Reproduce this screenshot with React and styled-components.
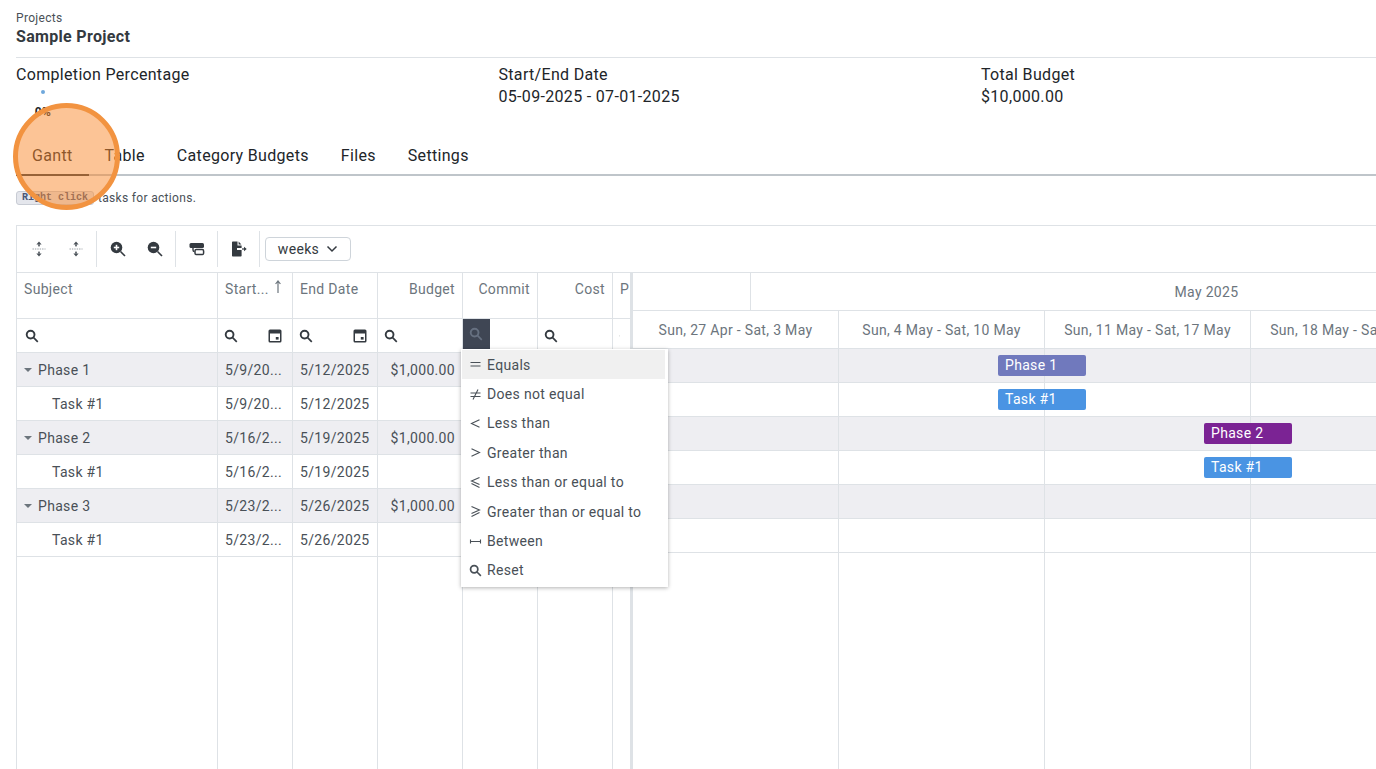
import styled, { createGlobalStyle } from 'styled-components';

const GlobalStyle = createGlobalStyle`
  html, body {
    margin: 0;
    padding: 0;
    height: 100%;
    overflow: hidden;
    background: #fff;
  }
  body {
    font-family: 'Roboto', 'Liberation Sans', sans-serif;
    letter-spacing: 0.02em;
    color: #212529;
  }
`;

const Viewport = styled.div`
  width: 1376px;
  height: 769px;
  overflow: hidden;
  position: relative;
`;

const Page = styled.div`
  width: 1447px;
  margin-left: 16px;
`;

const Header = styled.header`
  padding: 9px 0 10px;
  border-bottom: 1px solid #dee2e6;
`;

const Crumb = styled.div`
  font-size: 12px;
  line-height: 18px;
  color: #495057;
`;

const Title = styled.h1`
  margin: 0;
  font-size: 16px;
  line-height: 20px;
  font-weight: 700;
  color: #343a40;
`;

const Stats = styled.section`
  display: grid;
  grid-template-columns: repeat(3, 482.5px);
  padding-top: 6px;
  height: 55px;
`;

const Stat = styled.div`
  font-size: 16px;
  line-height: 22px;
`;

const Progress = styled.div`
  width: 54px;
  display: flex;
  flex-direction: column;
  align-items: center;
  padding-top: 4px;
`;

const ProgressDot = styled.span`
  width: 4px;
  height: 4px;
  border-radius: 50%;
  background: #6fa8dc;
`;

const ProgressText = styled.span`
  margin-top: 10px;
  font-size: 12px;
  line-height: 16px;
  font-weight: 700;
  color: #212529;
`;

const Tabs = styled.nav`
  display: flex;
  margin-top: 19px;
  border-bottom: 2px solid #bfc5ca;
`;

const Tab = styled.div`
  padding: 0 16px;
  height: 36px;
  line-height: 36px;
  font-size: 16px;
  margin-bottom: -2px;
  border-bottom: 2px solid ${({ $active }) => ($active ? '#343a40' : 'transparent')};
  box-sizing: content-box;
`;

const Hint = styled.p`
  margin: 14px 0 19px;
  font-size: 12px;
  line-height: 16px;
  color: #495057;
  display: flex;
  align-items: center;
  gap: 4px;
`;

const Kbd = styled.kbd`
  font-family: 'Liberation Mono', monospace;
  font-size: 10px;
  line-height: 10px;
  font-weight: 700;
  letter-spacing: 0;
  padding: 1px 5px;
  color: #495678;
  background: #e4e6ec;
  border: 1px solid #c8ccd4;
  border-radius: 3px;
`;

const Gantt = styled.section`
  position: relative;
  border-top: 1px solid #dee2e6;
  border-left: 1px solid #dee2e6;
  height: 543px;
  display: flex;
  flex-direction: column;
`;

const Toolbar = styled.div`
  display: flex;
  align-items: center;
  height: 46px;
  padding-left: 3px;
  border-bottom: 1px solid #dee2e6;
  box-sizing: content-box;
  flex: none;
`;

const ToolButton = styled.button`
  width: 37px;
  height: 36px;
  padding: 0;
  border: 0;
  background: transparent;
  display: flex;
  align-items: center;
  justify-content: center;
  color: #343a40;
`;

const ToolSep = styled.span`
  width: 1px;
  height: 36px;
  margin: 0 ${({ $after }) => $after ?? 2}px 0 2px;
  background: #dee2e6;
`;

const Select = styled.div`
  width: 86px;
  height: 24px;
  box-sizing: border-box;
  border: 1px solid #ced4da;
  border-radius: 4px;
  display: flex;
  align-items: center;
  justify-content: center;
  gap: 7px;
  font-size: 14px;
  color: #343a40;
`;

const Panes = styled.div`
  flex: 1;
  display: flex;
  min-height: 0;
`;

const LeftPane = styled.div`
  width: 614px;
  flex: none;
  display: flex;
  flex-direction: column;
  overflow: hidden;
`;

const Row = styled.div`
  display: grid;
  grid-template-columns: 201px 75px 85px 85px 75px 75px 18px;
  height: ${({ $h }) => $h}px;
  flex: ${({ $fill }) => ($fill ? '1' : 'none')};
  background: ${({ $band }) => ($band ? '#eeeef2' : '#fff')};
  font-size: 14px;
  color: #495057;
`;

const Cell = styled.div`
  box-sizing: border-box;
  border-right: 1px solid #dee2e6;
  border-bottom: ${({ $noLine }) => ($noLine ? '0' : '1px solid #dee2e6')};
  padding: 0 ${({ $right }) => ($right ? '7px' : '7px')} 0 7px;
  padding-left: ${({ $indent }) => $indent ?? 7}px;
  display: flex;
  align-items: center;
  justify-content: ${({ $right }) => ($right ? 'flex-end' : 'flex-start')};
  white-space: nowrap;
  overflow: hidden;
`;

const HeadCell = styled(Cell)`
  align-items: flex-start;
  padding-top: 7px;
  color: #6c757d;
  line-height: 18px;
  gap: 5px;
`;

const FilterCell = styled(Cell)`
  padding-left: ${({ $indent }) => $indent ?? 6}px;
  padding-right: 10px;
  justify-content: space-between;
  color: #343a40;
`;

const FilterActive = styled.span`
  width: 28px;
  height: 30px;
  margin: -3px 0 0 -7px;
  background: #3f4654;
  color: #667080;
  display: flex;
  align-items: center;
  justify-content: center;
`;

const Caret = styled.span`
  width: 0;
  height: 0;
  margin-right: 6px;
  margin-left: 0;
  border-left: 4.5px solid transparent;
  border-right: 4.5px solid transparent;
  border-top: 4.5px solid #6c757d;
`;

const RightPane = styled.div`
  flex: 1;
  min-width: 0;
  border-left: 2px solid #dee2e6;
  display: flex;
  flex-direction: column;
  overflow: hidden;
`;

const MonthRow = styled.div`
  display: flex;
  height: 38px;
  flex: none;
  border-bottom: 1px solid #dee2e6;
  box-sizing: border-box;
  font-size: 14px;
  color: #6c757d;
`;

const MonthCell = styled.div`
  width: ${({ $w }) => $w}px;
  flex: none;
  box-sizing: border-box;
  border-right: ${({ $line }) => ($line ? '1px solid #dee2e6' : '0')};
  display: flex;
  align-items: center;
  justify-content: center;
`;

const TimeRow = styled.div`
  position: relative;
  display: flex;
  height: ${({ $h }) => $h}px;
  flex: ${({ $fill }) => ($fill ? '1' : 'none')};
  background: ${({ $band }) => ($band ? '#eeeef2' : '#fff')};
`;

const TimeCell = styled.div`
  width: 206px;
  flex: none;
  box-sizing: border-box;
  border-right: 1px solid #dee2e6;
  border-bottom: ${({ $noLine }) => ($noLine ? '0' : '1px solid #dee2e6')};
  display: flex;
  align-items: center;
  justify-content: center;
  white-space: nowrap;
  font-size: 14px;
  color: #6c757d;
`;

const Bar = styled.div`
  position: absolute;
  top: 6px;
  left: ${({ $left }) => $left}px;
  width: 88px;
  height: 21px;
  border-radius: 2px;
  background: ${({ $color }) => $color};
  color: #fff;
  font-size: 14px;
  line-height: 20px;
  padding-left: 7px;
  box-sizing: border-box;
`;

const Menu = styled.ul`
  position: absolute;
  left: 444px;
  top: 123px;
  width: 207px;
  height: 238px;
  box-sizing: border-box;
  margin: 0;
  padding: 1px 3px 0 1px;
  list-style: none;
  background: #fff;
  box-shadow: 0 1px 4px rgba(0, 0, 0, 0.3);
  z-index: 5;
`;

const MenuItem = styled.li`
  height: 29.4px;
  display: flex;
  align-items: center;
  gap: 5px;
  padding-left: 6px;
  font-size: 14px;
  color: #495057;
  background: ${({ $active }) => ($active ? '#f0f0f0' : 'transparent')};
`;

const MenuIcon = styled.span`
  width: 14px;
  height: 14px;
  flex: none;
  display: flex;
  align-items: center;
  justify-content: center;
  color: #495057;
`;

const Spotlight = styled.div`
  position: absolute;
  left: 13px;
  top: 103px;
  width: 107px;
  height: 107px;
  box-sizing: border-box;
  border-radius: 50%;
  border: 5px solid #f29340;
  background: rgba(249, 137, 45, 0.5);
  z-index: 10;
`;

const SearchIcon = ({ size = 14 }) => (
  <svg width={size} height={size} viewBox="0 0 14 14" fill="none" stroke="currentColor">
    <circle cx="5.6" cy="5.6" r="3.9" strokeWidth="1.9" />
    <path d="M8.6 8.6 L12.8 12.8" strokeWidth="1.7" />
  </svg>
);

const CalendarIcon = () => (
  <svg width="14" height="14" viewBox="0 0 14 14" fill="none">
    <path fillRule="evenodd" fill="#343a40" d="M2 0.5h10a1.5 1.5 0 0 1 1.5 1.5v10a1.5 1.5 0 0 1-1.5 1.5H2A1.5 1.5 0 0 1 .5 12V2A1.5 1.5 0 0 1 2 .5zM2 4.5V12h10V4.5z" />
    <rect x="7.8" y="8" width="2.8" height="2.6" fill="#343a40" />
  </svg>
);

const SortArrow = () => (
  <svg width="8" height="14" viewBox="0 0 8 14" fill="none" stroke="#6c757d" strokeWidth="1.2">
    <path d="M4 13V1.5M1.6 4 L4 1 L6.4 4" />
  </svg>
);

const Chevron = () => (
  <svg width="12" height="8" viewBox="0 0 12 8" fill="none" stroke="#343a40" strokeWidth="1.5">
    <path d="M1.5 1.5 L6 6 L10.5 1.5" />
  </svg>
);

const ExpandIcon = ({ flip }) => (
  <svg width="14" height="16" viewBox="0 0 14 16" fill="#495057" style={flip ? { transform: 'scaleY(-1)' } : undefined}>
    <path d="M7 0.5 L9.6 3.6 H4.4z" />
    <rect x="6.2" y="3.4" width="1.6" height="2" />
    <path d="M7 15.5 L4.4 12.4 H9.6z" />
    <rect x="6.2" y="10.6" width="1.6" height="2" />
    <path d="M0.5 8H13.5" stroke="#9aa0a6" strokeWidth="1" strokeDasharray="1.4 1" />
  </svg>
);

const ZoomIcon = ({ plus }) => (
  <svg width="16" height="16" viewBox="0 0 16 16">
    <circle cx="6.5" cy="6.5" r="5.8" fill="#343a40" />
    <path d="M10.5 10.5 L15 15" stroke="#343a40" strokeWidth="1.6" />
    <path d="M3.8 6.5H9.2" stroke="#fff" strokeWidth="1.6" />
    {plus && <path d="M6.5 3.8V9.2" stroke="#fff" strokeWidth="1.6" />}
  </svg>
);

const TaskbarIcon = () => (
  <svg width="16" height="14" viewBox="0 0 16 14">
    <rect x="0.5" y="1" width="14.5" height="5" rx="1.5" fill="#343a40" />
    <path d="M4 6 V8 A1.5 1.5 0 0 0 5.5 9.5" fill="none" stroke="#343a40" strokeWidth="1.4" />
    <rect x="6" y="7.6" width="8.6" height="5" rx="1.4" fill="none" stroke="#343a40" strokeWidth="1.5" />
  </svg>
);

const ExportIcon = () => (
  <svg width="16" height="16" viewBox="0 0 16 16" fill="#343a40">
    <path d="M1 1.2 A0.8 0.8 0 0 1 1.8 .4 H6.5 V4.6 H10.6 V7 H6 V9 H10.6 V14.7 A0.8 0.8 0 0 1 9.8 15.5 H1.8 A0.8 0.8 0 0 1 1 14.7z" />
    <path d="M7.6 .6 L10.4 3.5 H7.6z" />
    <path d="M11 8H14" stroke="#343a40" strokeWidth="1.2" />
    <path d="M13 5.8 L15.7 8 L13 10.2z" />
  </svg>
);

const OpIcon = ({ d }) => (
  <svg width="13" height="13" viewBox="0 0 13 13" fill="none" stroke="currentColor" strokeWidth="1.1">
    <path d={d} />
  </svg>
);

const operators = [
  { label: 'Equals', d: 'M1.5 4.5H11.5M1.5 8H11.5', active: true },
  { label: 'Does not equal', d: 'M1.5 5H11.5M1.5 8.5H11.5M9 1.5L4 11.5' },
  { label: 'Less than', d: 'M10.5 2.8L2.5 6.5L10.5 10.2' },
  { label: 'Greater than', d: 'M2.5 2.8L10.5 6.5L2.5 10.2' },
  { label: 'Less than or equal to', d: 'M10.5 1.5L2.5 5L10.5 8.5M2.5 7.5L10.5 11.5' },
  { label: 'Greater than or equal to', d: 'M2.5 1.5L10.5 5L2.5 8.5M10.5 7.5L2.5 11.5' },
  { label: 'Between', d: 'M1.5 6.5H11.5M1.5 4.5V8.5M11.5 4.5V8.5' },
];

const rows = [
  { name: 'Phase 1', start: '5/9/20...', end: '5/12/2025', budget: '$1,000.00', band: true },
  { name: 'Task #1', start: '5/9/20...', end: '5/12/2025' },
  { name: 'Phase 2', start: '5/16/2...', end: '5/19/2025', budget: '$1,000.00', band: true },
  { name: 'Task #1', start: '5/16/2...', end: '5/19/2025' },
  { name: 'Phase 3', start: '5/23/2...', end: '5/26/2025', budget: '$1,000.00', band: true },
  { name: 'Task #1', start: '5/23/2...', end: '5/26/2025' },
];

const bars = [
  { label: 'Phase 1', left: 365, color: '#7079bd' },
  { label: 'Task #1', left: 365, color: '#4a94e3' },
  { label: 'Phase 2', left: 571, color: '#7b2394' },
  { label: 'Task #1', left: 571, color: '#4a94e3' },
  null,
  null,
];

const weeks = [
  'Sun, 27 Apr - Sat, 3 May',
  'Sun, 4 May - Sat, 10 May',
  'Sun, 11 May - Sat, 17 May',
  'Sun, 18 May - Sat, 24 May',
];

const EmptyWeeks = ({ noLine }) =>
  weeks.map((week) => <TimeCell key={week} $noLine={noLine} />);

export default function App() {
  return (
    <Viewport>
      <GlobalStyle />
      <Page>
        <Header>
          <Crumb>Projects</Crumb>
          <Title>Sample Project</Title>
        </Header>
        <Stats>
          <Stat>
            Completion Percentage
            <Progress>
              <ProgressDot />
              <ProgressText>0%</ProgressText>
            </Progress>
          </Stat>
          <Stat>
            Start/End Date
            <br />
            05-09-2025 - 07-01-2025
          </Stat>
          <Stat>
            Total Budget
            <br />
            $10,000.00
          </Stat>
        </Stats>
        <Tabs>
          <Tab $active>Gantt</Tab>
          <Tab>Table</Tab>
          <Tab>Category Budgets</Tab>
          <Tab>Files</Tab>
          <Tab>Settings</Tab>
        </Tabs>
        <Hint>
          <Kbd>Right click</Kbd> tasks for actions.
        </Hint>
        <Gantt>
          <Toolbar>
            <ToolButton><ExpandIcon /></ToolButton>
            <ToolButton><ExpandIcon flip /></ToolButton>
            <ToolSep />
            <ToolButton><ZoomIcon plus /></ToolButton>
            <ToolButton><ZoomIcon /></ToolButton>
            <ToolSep />
            <ToolButton><TaskbarIcon /></ToolButton>
            <ToolSep />
            <ToolButton><ExportIcon /></ToolButton>
            <ToolSep $after={5} />
            <Select>weeks <Chevron /></Select>
          </Toolbar>
          <Panes>
            <LeftPane>
              <Row $h={46}>
                <HeadCell>Subject</HeadCell>
                <HeadCell>Start... <SortArrow /></HeadCell>
                <HeadCell>End Date</HeadCell>
                <HeadCell $right>Budget</HeadCell>
                <HeadCell $right>Commit</HeadCell>
                <HeadCell $right>Cost</HeadCell>
                <HeadCell>P</HeadCell>
              </Row>
              <Row $h={34}>
                <FilterCell $indent={8}><SearchIcon /></FilterCell>
                <FilterCell><SearchIcon /><CalendarIcon /></FilterCell>
                <FilterCell><SearchIcon /><CalendarIcon /></FilterCell>
                <FilterCell><SearchIcon /></FilterCell>
                <FilterCell><FilterActive><SearchIcon /></FilterActive></FilterCell>
                <FilterCell><SearchIcon /></FilterCell>
                <FilterCell><SearchIcon /></FilterCell>
              </Row>
              {rows.map((row, i) => (
                <Row key={i} $h={34} $band={row.band}>
                  <Cell $indent={row.band ? 7 : 35}>
                    {row.band && <Caret />}
                    {row.name}
                  </Cell>
                  <Cell>{row.start}</Cell>
                  <Cell>{row.end}</Cell>
                  <Cell $right>{row.budget}</Cell>
                  <Cell />
                  <Cell />
                  <Cell />
                </Row>
              ))}
              <Row $fill>
                <Cell $noLine />
                <Cell $noLine />
                <Cell $noLine />
                <Cell $noLine />
                <Cell $noLine />
                <Cell $noLine />
                <Cell $noLine />
              </Row>
            </LeftPane>
            <RightPane>
              <MonthRow>
                <MonthCell $w={118} $line />
                <MonthCell $w={911}>May 2025</MonthCell>
              </MonthRow>
              <TimeRow $h={38}>
                {weeks.map((week) => <TimeCell key={week}>{week}</TimeCell>)}
              </TimeRow>
              {bars.map((bar, i) => (
                <TimeRow key={i} $h={34} $band={i % 2 === 0}>
                  <EmptyWeeks />
                  {bar && <Bar $left={bar.left} $color={bar.color}>{bar.label}</Bar>}
                </TimeRow>
              ))}
              <TimeRow $fill>
                <EmptyWeeks noLine />
              </TimeRow>
            </RightPane>
          </Panes>
          <Menu>
            {operators.map((op) => (
              <MenuItem key={op.label} $active={op.active}>
                <MenuIcon><OpIcon d={op.d} /></MenuIcon>
                {op.label}
              </MenuItem>
            ))}
            <MenuItem>
              <MenuIcon><SearchIcon size={13} /></MenuIcon>
              Reset
            </MenuItem>
          </Menu>
        </Gantt>
      </Page>
      <Spotlight />
    </Viewport>
  );
}
